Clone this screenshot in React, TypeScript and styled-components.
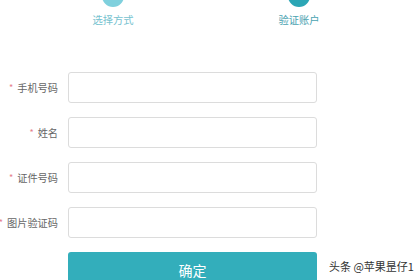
import { Fragment } from "react";
import styled, { createGlobalStyle } from "styled-components";

const GlobalStyle = createGlobalStyle`
  html, body {
    margin: 0;
    padding: 0;
    background: #fff;
    overflow: hidden;
  }
  body {
    font-family: "Noto Sans CJK SC", "Liberation Sans", sans-serif;
  }
`;

const Page = styled.div`
  position: relative;
  width: 420px;
  height: 280px;
  overflow: hidden;
`;

const Steps = styled.div`
  display: flex;
  gap: 106px;
  padding-left: 73px;
`;

const Step = styled.div`
  width: 80px;
  display: flex;
  flex-direction: column;
  align-items: center;
`;

const Dot = styled.div<{ $active?: boolean }>`
  width: 22px;
  height: 22px;
  margin-top: -15px;
  border-radius: 50%;
  background: ${(p) => (p.$active ? "#2ba6b5" : "#7fd0dd")};
`;

const StepText = styled.div<{ $active?: boolean }>`
  margin-top: 6px;
  font-size: 10.3px;
  line-height: 14px;
  color: ${(p) => (p.$active ? "#4aa3b1" : "#76c2cf")};
`;

const Form = styled.div`
  display: grid;
  grid-template-columns: 58px 249px;
  column-gap: 10px;
  row-gap: 14px;
  margin-top: 45px;
`;

const Label = styled.label`
  display: flex;
  align-items: center;
  justify-content: flex-end;
  font-size: 10.2px;
  color: #666;
  white-space: nowrap;
`;

const Star = styled.span`
  color: #e57f8c;
  font-size: 9px;
  margin-right: 4px;
`;

const Input = styled.input`
  box-sizing: border-box;
  height: 31px;
  width: 249px;
  border: 1px solid #dcdcdc;
  border-radius: 3px;
  background: #fff;
  outline: none;
`;

const Submit = styled.button`
  grid-column: 2;
  height: 34px;
  border: none;
  border-radius: 3px;
  background: #33aebb;
  color: #fff;
  font-family: inherit;
  font-size: 14px;
  padding: 0;
  padding-top: 2px;
`;

const Watermark = styled.div`
  position: absolute;
  left: 329px;
  top: 258px;
  font-size: 11px;
  color: #333;
  white-space: nowrap;
`;

const fields = ["手机号码", "姓名", "证件号码", "图片验证码"];

export default function App() {
  return (
    <Page>
      <GlobalStyle />
      <Steps>
        <Step>
          <Dot />
          <StepText>选择方式</StepText>
        </Step>
        <Step>
          <Dot $active />
          <StepText $active>验证账户</StepText>
        </Step>
      </Steps>
      <Form>
        {fields.map((f) => (
          <Fragment key={f}>
            <Label>
              <Star>*</Star>
              {f}
            </Label>
            <Input />
          </Fragment>
        ))}
        <Submit>确定</Submit>
      </Form>
      <Watermark>头条 @苹果昰仔1</Watermark>
    </Page>
  );
}
